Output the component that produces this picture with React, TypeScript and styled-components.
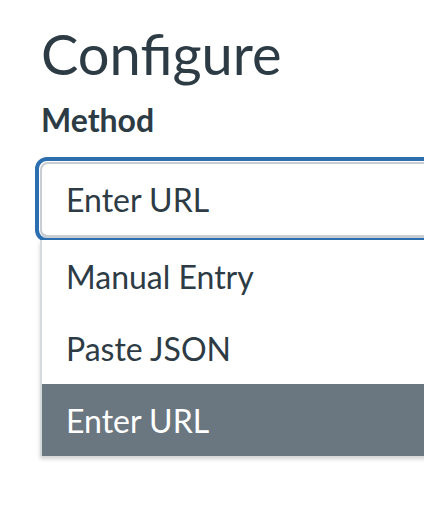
import React from "react";
import styled, { createGlobalStyle } from "styled-components";

const GlobalStyle = createGlobalStyle`
  html, body {
    margin: 0;
    padding: 0;
    background: #ffffff;
    overflow: hidden;
  }
  body {
    font-family: Lato, "Liberation Sans", sans-serif;
    color: #2d3b45;
  }
`;

const Page = styled.div`
  width: 424px;
  height: 512px;
  overflow: hidden;
  padding: 19px 0 0 40px;
  box-sizing: border-box;
`;

const Heading = styled.h1`
  margin: 0;
  font-size: 56px;
  font-weight: 400;
  line-height: 70px;
  padding-left: 1px;
`;

const Label = styled.div`
  margin-top: 7px;
  font-size: 32px;
  font-weight: 700;
  line-height: 48px;
  padding-left: 1px;
`;

const SelectWrap = styled.div`
  position: relative;
  margin-top: 18px;
  width: 600px;
`;

const Input = styled.div`
  position: relative;
  height: 76px;
  box-sizing: border-box;
  border: 2px solid #c7cdd1;
  border-bottom-width: 3px;
  border-radius: 8px;
  background: #fff;
  display: flex;
  align-items: center;
  padding: 0 24px;
  font-size: 32px;

  /* focus ring */
  &::before {
    content: "";
    position: absolute;
    inset: -7px;
    border: 4px solid #2b6fb0;
    border-radius: 12px;
    pointer-events: none;
  }
`;

const Menu = styled.ul`
  position: absolute;
  top: 78px;
  left: 0;
  width: 100%;
  margin: 0;
  padding: 0;
  list-style: none;
  background: #fff;
  border-left: 2px solid #d5dadd;
  box-shadow: 0 3px 4px rgba(0, 0, 0, 0.18);
`;

const Option = styled.li<{ $active?: boolean }>`
  height: 72px;
  display: flex;
  align-items: center;
  padding: 0 24px;
  font-size: 32px;
  background: ${(p) => (p.$active ? "#6b7780" : "#fff")};
  color: ${(p) => (p.$active ? "#fff" : "#2d3b45")};
`;

const options = ["Manual Entry", "Paste JSON", "Enter URL"];

export default function App() {
  const selected = "Enter URL";
  return (
    <>
      <GlobalStyle />
      <Page>
        <Heading>Configure</Heading>
        <Label>Method</Label>
        <SelectWrap>
          <Input>{selected}</Input>
          <Menu>
            {options.map((o) => (
              <Option key={o} $active={o === selected}>
                {o}
              </Option>
            ))}
          </Menu>
        </SelectWrap>
      </Page>
    </>
  );
}
